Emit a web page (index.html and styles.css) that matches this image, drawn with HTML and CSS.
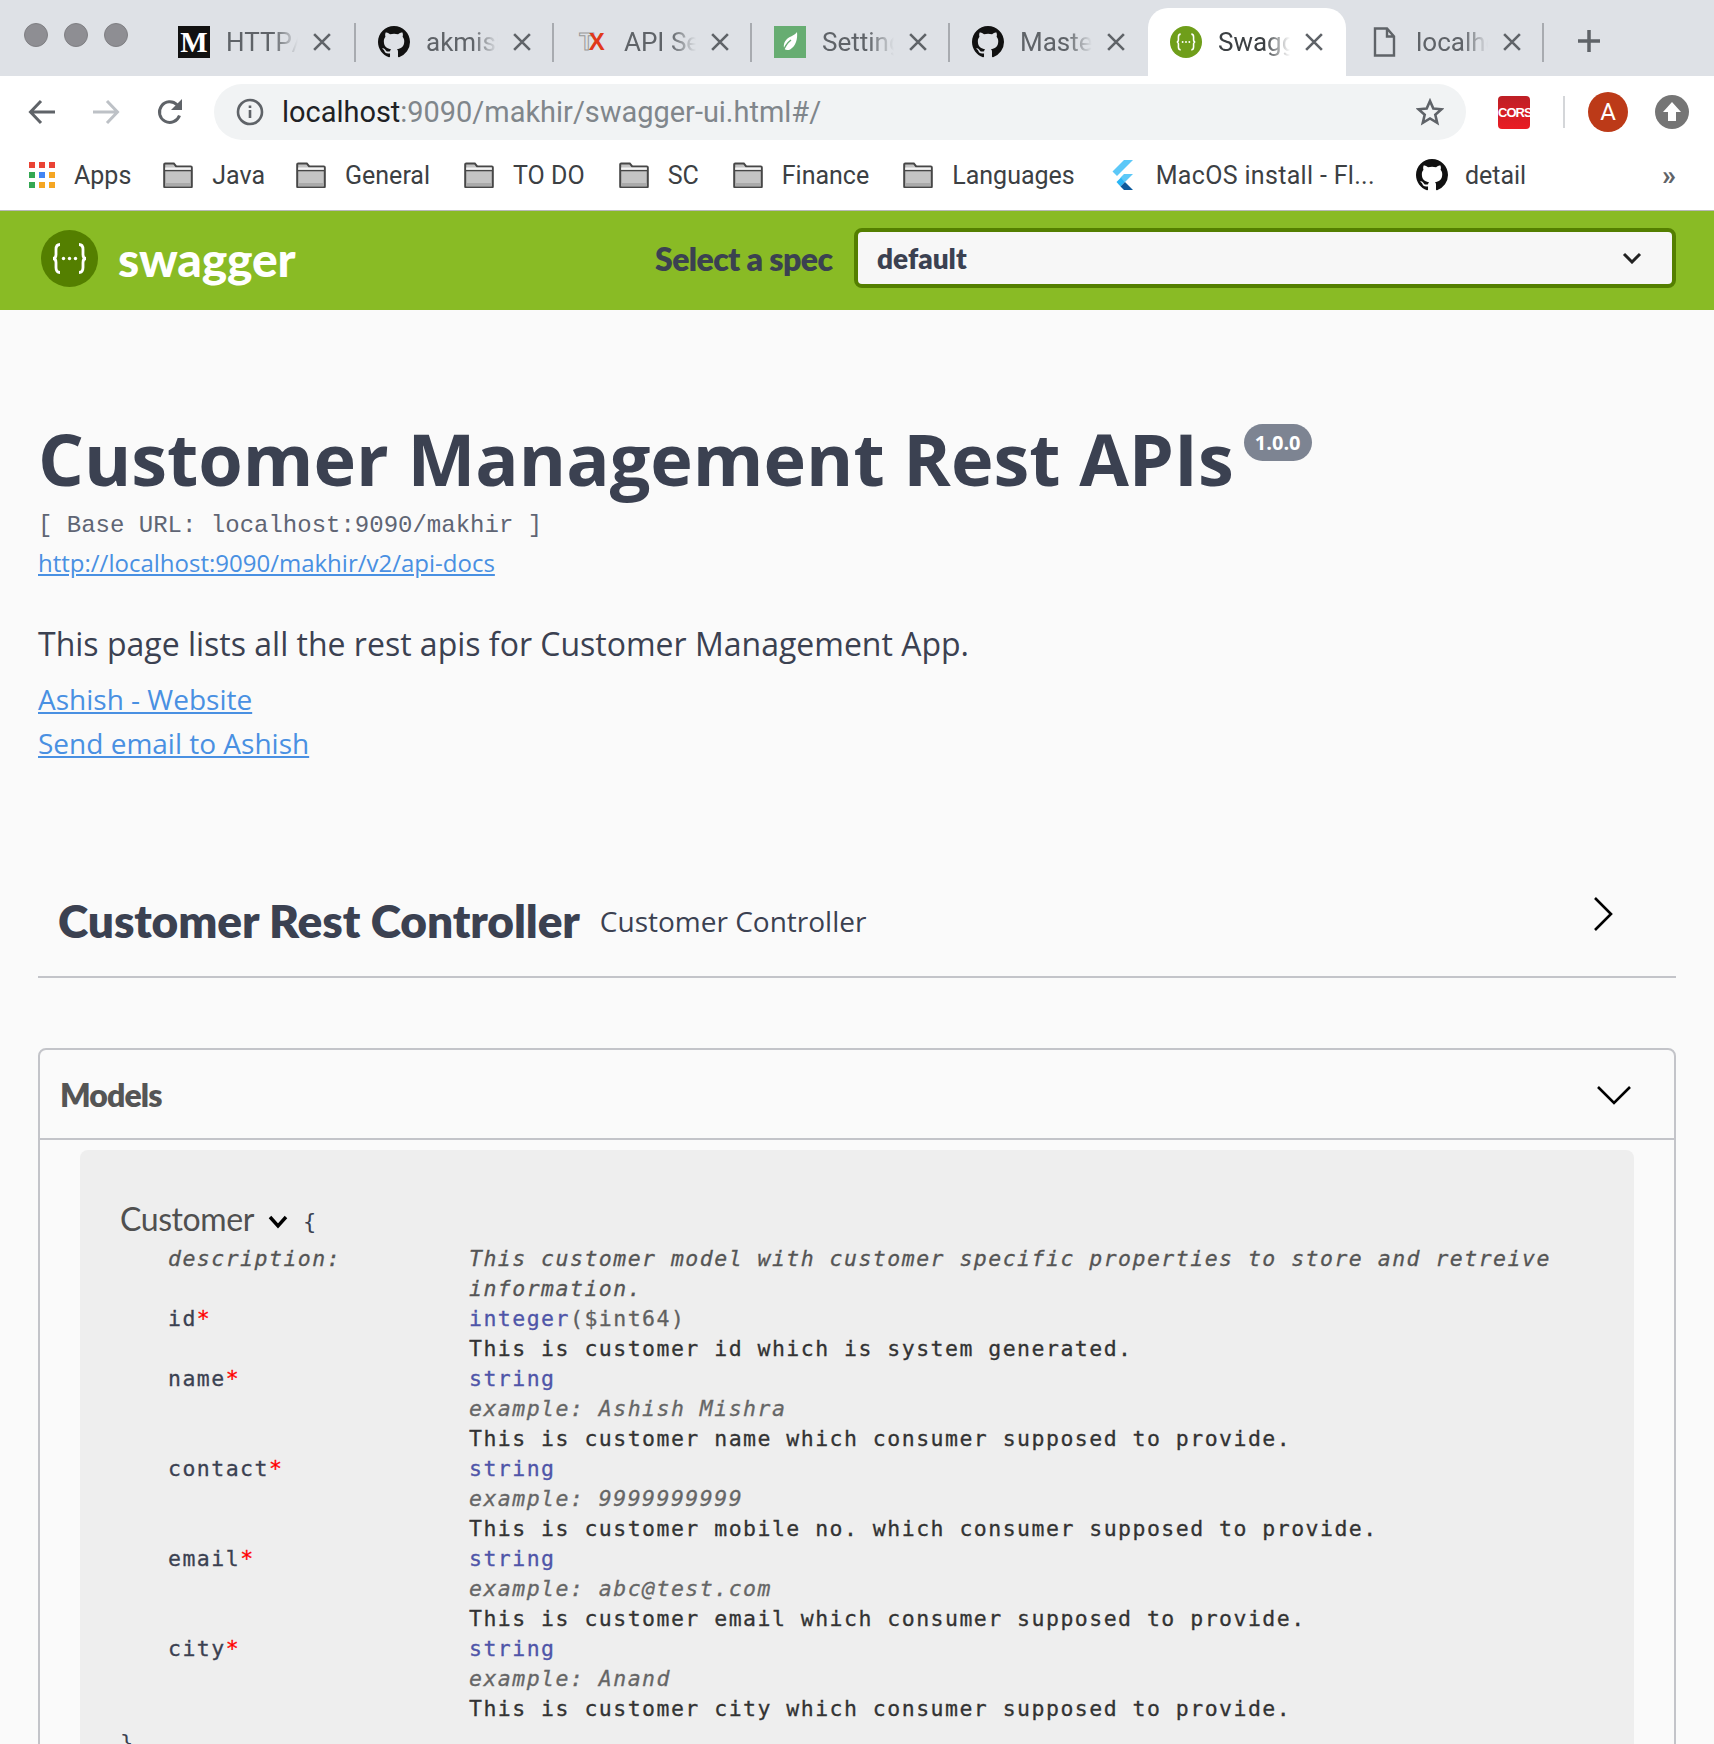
FILE: index.html
```html
<!DOCTYPE html>
<html lang="en">
<head>
  <meta charset="UTF-8" />
  <title>Swagger UI</title>
  <link rel="stylesheet" href="styles.css">
</head>
<body>
  <svg class="defs" width="0" height="0">
    <symbol id="gh" viewBox="0 0 16 16"><path d="M8 0C3.58 0 0 3.58 0 8c0 3.54 2.29 6.53 5.47 7.59.4.07.55-.17.55-.38 0-.19-.01-.82-.01-1.49-2.01.37-2.53-.49-2.69-.94-.09-.23-.48-.94-.82-1.13-.28-.15-.68-.52-.01-.53.63-.01 1.08.58 1.23.82.72 1.21 1.87.87 2.33.66.07-.52.28-.87.51-1.07-1.78-.2-3.64-.89-3.64-3.95 0-.87.31-1.59.82-2.15-.08-.2-.36-1.02.08-2.12 0 0 .67-.21 2.2.82.64-.18 1.32-.27 2-.27s1.36.09 2 .27c1.53-1.04 2.2-.82 2.2-.82.44 1.1.16 1.92.08 2.12.51.56.82 1.27.82 2.15 0 3.07-1.87 3.75-3.65 3.95.29.25.54.73.54 1.48 0 1.07-.01 1.93-.01 2.2 0 .21.15.46.55.38A8.01 8.01 0 0 0 16 8c0-4.42-3.58-8-8-8z"/></symbol>
    <symbol id="x" viewBox="0 0 16 16"><path d="M1 1l14 14M15 1L1 15" fill="none" stroke="currentColor" stroke-width="2.300"/></symbol>
    <symbol id="folder" viewBox="0 0 30 26"><path d="M1.2 24.6V2.4a1 1 0 0 1 1-1h8.6l2.4 3h14.6a1 1 0 0 1 1 1v19.2a.8.8 0 0 1-.8.8H2a.8.8 0 0 1-.8-.8z" fill="#c4c4c4" stroke="#474747" stroke-width="2"/><path d="M2.2 5.5h25.6v3H2.2z" fill="#f4f4f4"/><path d="M2 8.6h26" stroke="#474747" stroke-width="1.4"/><path d="M2.2 21h25.6v3H2.2z" fill="#aaa"/></symbol>
    <symbol id="swag" viewBox="0 0 57 57">
      <circle cx="28.500" cy="28.500" r="28.500" fill="currentColor"/>
      <path d="M19 14.500c-3.500 0-4 2-4 5v5c0 2.200-1 4-3 4 2 0 3 1.800 3 4v5c0 3 .5 5 4 5M38 14.500c3.500 0 4 2 4 5v5c0 2.200 1 4 3 4-2 0-3 1.800-3 4v5c0 3-.5 5-4 5" fill="none" stroke="#fff" stroke-width="2.800"/>
      <circle cx="22.500" cy="28.500" r="1.700" fill="#fff"/><circle cx="28.500" cy="28.500" r="1.700" fill="#fff"/><circle cx="34.500" cy="28.500" r="1.700" fill="#fff"/>
    </symbol>
  </svg>

  <div class="tabstrip">
    <div class="lights"><i></i><i></i><i></i></div>
    <div class="tab">
      <span class="fav fav-medium">M</span>
      <span class="tab-title">HTTP/2 in</span>
      <svg class="tab-x"><use href="#x"/></svg>
    </div>
    <div class="tab">
      <svg class="fav fav-gh"><use href="#gh"/></svg>
      <span class="tab-title">akmishra</span>
      <svg class="tab-x"><use href="#x"/></svg>
    </div>
    <div class="tab">
      <span class="fav fav-tx"><b class="tx-t">T</b><b class="tx-x">X</b></span>
      <span class="tab-title">API Secur</span>
      <svg class="tab-x"><use href="#x"/></svg>
    </div>
    <div class="tab">
      <svg class="fav" viewBox="0 0 32 32"><rect width="32" height="32" fill="#67ad72"/><path d="M23 6c.8 7-1.200 14-6.500 17.200-2.300 1.300-4.700 1-6-.2C9 20 10 15.500 13.500 12.500 16.300 10.300 20.500 9.700 23 6z" fill="#fff"/><path d="M9 26c1.500-5 4-9 8-12" stroke="#67ad72" stroke-width="1.500" fill="none"/></svg>
      <span class="tab-title">Settings</span>
      <svg class="tab-x"><use href="#x"/></svg>
    </div>
    <div class="tab tab-before-active">
      <svg class="fav fav-gh"><use href="#gh"/></svg>
      <span class="tab-title">Master Sp</span>
      <svg class="tab-x"><use href="#x"/></svg>
    </div>
    <div class="tab tab-active">
      <svg class="fav fav-swag"><use href="#swag"/></svg>
      <span class="tab-title">Swagger</span>
      <svg class="tab-x"><use href="#x"/></svg>
    </div>
    <div class="tab">
      <svg class="fav" viewBox="0 0 32 32"><path d="M7 2.500h12l7 8V29.500H7z M19 2.500v8h7" fill="none" stroke="#5f6368" stroke-width="2.400"/></svg>
      <span class="tab-title">localhost</span>
      <svg class="tab-x"><use href="#x"/></svg>
    </div>
    <svg class="newtab" viewBox="0 0 24 24"><path d="M12 1v22M1 12h22" stroke="#5f6368" stroke-width="3.500"/></svg>
  </div>

  <div class="toolbar">
    <svg class="nav-icon" viewBox="0 0 28 28"><path d="M27 14H3M13 3L2.500 14 13 25" fill="none" stroke="#5f6368" stroke-width="3"/></svg>
    <svg class="nav-icon nav-fwd" viewBox="0 0 28 28"><path d="M1 14h24M15 3l10.500 11L15 25" fill="none" stroke="#bdc1c6" stroke-width="3"/></svg>
    <svg class="nav-icon" viewBox="0 0 28 28"><path d="M23.500 17.500A10.300 10.300 0 1 1 21 6.800" fill="none" stroke="#5f6368" stroke-width="3"/><path d="M26 1v11H15z" fill="#5f6368"/></svg>
    <div class="omnibox">
      <svg class="site-info" viewBox="0 0 28 28"><circle cx="14" cy="14" r="12" fill="none" stroke="#5f6368" stroke-width="2.600"/><path d="M14 12v8M14 7.500v2.600" stroke="#5f6368" stroke-width="2.600"/></svg>
      <span class="url"><span class="url-host">localhost</span>:9090/makhir/swagger-ui.html#/</span>
      <svg class="star" viewBox="0 0 28 28"><path d="M14 3l3.300 7.600 8.200.7-6.200 5.400 1.900 8.100L14 20.500l-7.200 4.300 1.900-8.100-6.200-5.400 8.200-.7z" fill="none" stroke="#5f6368" stroke-width="2.600"/></svg>
    </div>
    <span class="cors">CORS</span>
    <span class="tool-sep"></span>
    <span class="avatar">A</span>
    <svg class="update" viewBox="0 0 34 34"><circle cx="17" cy="17" r="17" fill="#757575"/><path d="M17 7l9 10h-5v9h-8v-9H8z" fill="#fff"/></svg>
  </div>

  <div class="bookmarks">
    <span class="bm bm-apps"><span class="apps"><i class="r"></i><i class="r"></i><i class="r"></i><i class="g"></i><i class="b"></i><i class="o"></i><i class="g"></i><i class="o"></i><i class="o"></i></span>Apps</span>
    <span class="bm bm-java"><svg class="bm-icon"><use href="#folder"/></svg>Java</span>
    <span class="bm"><svg class="bm-icon"><use href="#folder"/></svg>General</span>
    <span class="bm"><svg class="bm-icon"><use href="#folder"/></svg>TO DO</span>
    <span class="bm"><svg class="bm-icon"><use href="#folder"/></svg>SC</span>
    <span class="bm"><svg class="bm-icon"><use href="#folder"/></svg>Finance</span>
    <span class="bm"><svg class="bm-icon"><use href="#folder"/></svg>Languages</span>
    <span class="bm bm-macos"><svg class="bm-flutter" viewBox="0 0 24 30"><path d="M15 0h9L8 16l-4.500-4.500z" fill="#5cc8f8"/><path d="M15 14h9l-8 8-4.500-4.500z" fill="#5cc8f8"/><path d="M7.500 22l4.500-4.500 4 4.500-4.500 4.500z" fill="#29b6f6"/><path d="M11.500 26.500l4.500-4.500 8 8h-9z" fill="#0d5a9c"/></svg>MacOS install - Fl...</span>
    <span class="bm"><svg class="bm-gh"><use href="#gh"/></svg>detail</span>
    <span class="bm-more">»</span>
  </div>

  <div class="topbar">
    <div class="logo">
      <svg class="logo-mark"><use href="#swag"/></svg>
      <span class="logo-text">swagger</span>
    </div>
    <label class="spec-label">Select a spec</label>
    <div class="spec-select">
      <span>default</span>
      <svg class="spec-arrow" viewBox="0 0 20 12"><path d="M2 2l8 8 8-8" fill="none" stroke="#222" stroke-width="3"/></svg>
    </div>
  </div>

  <main class="page">
    <section class="info">
      <h1>Customer Management Rest APIs<span class="version">1.0.0</span></h1>
      <div class="base-url">[ Base URL: localhost:9090/makhir ]</div>
      <a class="spec-link" href="#">http://localhost:9090/makhir/v2/api-docs</a>
      <p class="desc">This page lists all the rest apis for Customer Management App.</p>
      <a class="info-link" href="#">Ashish - Website</a>
      <a class="info-link" href="#">Send email to Ashish</a>
    </section>

    <div class="tag-row">
      <h2>Customer Rest Controller</h2>
      <span class="tag-desc">Customer Controller</span>
      <svg class="tag-arrow" viewBox="0 0 20 36"><path d="M2 2l16 16L2 34" fill="none" stroke="#000" stroke-width="2.600"/></svg>
    </div>

    <section class="models">
      <div class="models-head">
        <h3>Models</h3>
        <svg class="models-arrow" viewBox="0 0 36 20"><path d="M2 2l16 16L34 2" fill="none" stroke="#000" stroke-width="2.600"/></svg>
      </div>
      <div class="model-box">
        <div class="model-title">Customer <svg class="model-arrow" viewBox="0 0 20 14"><path d="M2 2l8 9 8-9" fill="none" stroke="#000" stroke-width="3.400"/></svg> <span class="brace">{</span></div>
        <table class="model">
          <tr class="desc-row"><td>description:</td><td>This customer model with customer specific properties to store and retreive information.</td></tr>
          <tr><td>id<em>*</em></td><td><div><span class="type">integer</span><span class="fmt">($int64)</span></div><div>This is customer id which is system generated.</div></td></tr>
          <tr><td>name<em>*</em></td><td><div class="type">string</div><div class="eg">example: Ashish Mishra</div><div>This is customer name which consumer supposed to provide.</div></td></tr>
          <tr><td>contact<em>*</em></td><td><div class="type">string</div><div class="eg">example: 9999999999</div><div>This is customer mobile no. which consumer supposed to provide.</div></td></tr>
          <tr><td>email<em>*</em></td><td><div class="type">string</div><div class="eg">example: abc@test.com</div><div>This is customer email which consumer supposed to provide.</div></td></tr>
          <tr><td>city<em>*</em></td><td><div class="type">string</div><div class="eg">example: Anand</div><div>This is customer city which consumer supposed to provide.</div></td></tr>
        </table>
        <div class="brace close">}</div>
      </div>
    </section>
  </main>
</body>
</html>
```

FILE: styles.css
```css
html, body { margin: 0; height: 1744px; overflow: hidden; }
body { background: #fafafa; font-family: "Open Sans", sans-serif; color: #3b4151; }
.defs { position: absolute; }

.tabstrip { height: 76px; background: #dee1e6; display: flex; align-items: flex-end; font-family: Roboto, sans-serif; }
.lights { width: 158px; height: 76px; box-sizing: border-box; padding: 23px 0 0 24px; display: flex; gap: 16px; }
.lights i { width: 24px; height: 24px; border-radius: 50%; background: #8e8e93; border: 1px solid #7f7f83; box-sizing: border-box; }
.tab { width: 198px; height: 68px; box-sizing: border-box; display: flex; align-items: center; padding: 0 0 1px 22px; position: relative; color: #5f6368; font-size: 26px; }
.tab::after { content: ""; position: absolute; right: 0; top: 15px; height: 39px; width: 2px; background: #a8abb0; }
.tab-before-active::after, .tab-active::after { display: none; }
.tab-active { background: #fff; border-radius: 20px 20px 0 0; color: #3c4043; }
.fav { width: 32px; height: 32px; flex: none; }
.fav-medium { background: #111; color: #fff; font: bold 29px/32px "Liberation Serif", serif; text-align: center; margin-left: -2px; }
.fav-gh { fill: #111; }
.fav-swag { color: #6f9e1a; }
.fav-tx { display: flex; font: bold 24px/32px "Liberation Sans", sans-serif; justify-content: center; }
.tx-t { color: #dfe1e5; -webkit-text-stroke: 1px #999; margin-right: -5px; }
.tx-x { color: #e0391b; }
.tab-title { width: 72px; margin-left: 16px; overflow: hidden; white-space: nowrap; -webkit-mask-image: linear-gradient(to right, #000 65%, transparent); mask-image: linear-gradient(to right, #000 65%, transparent); }
.tab-x { width: 18px; height: 18px; margin-left: 15px; color: #5f6368; }
.newtab { width: 24px; height: 24px; margin: 0 0 23px 33px; }

.toolbar { height: 64px; background: #fff; display: flex; align-items: center; padding: 0 0 0 28px; }
.nav-icon { width: 28px; height: 28px; flex: none; margin: 8px 36px 0 0; }
.omnibox { flex: none; width: 1252px; height: 56px; margin: 8px 0 0 -6px; background: #f1f3f4; border-radius: 28px; display: flex; align-items: center; padding: 0 22px 0 22px; box-sizing: border-box; }
.site-info { width: 28px; height: 28px; flex: none; }
.url { margin-left: 18px; font: 28.950px Roboto, sans-serif; color: #80868b; flex: 1; white-space: nowrap; }
.url-host { color: #202124; }
.star { width: 28px; height: 28px; flex: none; }
.cors { width: 32px; height: 33px; margin: 8px 0 0 32px; background: linear-gradient(#bd1f25, #ea1c24); border-radius: 4px; color: #fff; font: bold 13px/33px "Liberation Sans", sans-serif; text-align: center; letter-spacing: -1px; }
.tool-sep { width: 2px; height: 32px; margin: 8px 0 0 33px; background: #d4d6d9; }
.avatar { width: 40px; height: 40px; margin: 8px 0 0 23px; border-radius: 50%; background: #bc3a18; color: #fff; font: 24px/40px Roboto, sans-serif; text-align: center; }
.update { width: 34px; height: 34px; margin: 8px 0 0 27px; }

.bookmarks { height: 70px; border-bottom: 1px solid #b8b8b8; background: #fff; display: flex; align-items: center; padding: 0 0 0 29px; font: 25px Roboto, sans-serif; color: #3c4043; position: relative; }
.bm { display: flex; align-items: center; margin-right: 34px; white-space: nowrap; }
.bm-apps { margin-right: 32px; }
.bm-java { margin-right: 31px; }
.bm-macos { margin-right: 41px; letter-spacing: .32px; }
.apps { width: 26px; height: 26px; display: grid; grid-template-columns: repeat(3, 6px); gap: 4px; margin-right: 19px; }
.apps i { width: 6px; height: 6px; }
.apps .r { background: #ea4335; }
.apps .g { background: #34a853; }
.apps .b { background: #4285f4; }
.apps .o { background: #f5a623; }
.bm-icon { width: 30px; height: 26px; margin-right: 19px; }
.bm-flutter { width: 24px; height: 30px; margin-right: 23px; }
.bm-gh { width: 32px; height: 32px; margin-right: 17px; fill: #111; }
.bm-more { position: absolute; right: 38px; color: #5f6368; font-size: 28px; font-weight: 700; }

.topbar { height: 99px; background: #89bb25; display: flex; align-items: center; box-sizing: border-box; padding: 0 38px 5px 41px; }
.logo { display: flex; align-items: center; width: 614px; }
.logo-mark { width: 57px; height: 57px; color: #547f00; }
.logo-text { margin-left: 20px; font: 900 48px Lato, sans-serif; color: #fff; letter-spacing: -.2px; }
.spec-label { font: 800 32px Lato, sans-serif; width: 199px; color: #3b4151; letter-spacing: -.6px; }
.spec-select { flex: 1; height: 60px; box-sizing: border-box; border: 4px solid #547f00; border-radius: 8px; background: #f7f7f7; display: flex; align-items: center; justify-content: space-between; padding: 0 30px 0 19px; font: 800 28px Lato, sans-serif; }
.spec-arrow { width: 20px; height: 12px; }

.page { padding: 0 38px; }
.info { padding-top: 105px; }
h1 { margin: 0; font: 700 72px/86px "Open Sans", sans-serif; white-space: nowrap; }
.version { display: inline-block; vertical-align: top; margin: 9px 0 0 10px; width: 68px; height: 37px; border-radius: 19px; background: #7d8492; color: #fff; font: 700 20px/37px "Open Sans", sans-serif; text-align: center; }
.base-url { margin-top: 10px; font: 24px/30px "Liberation Mono", monospace; color: #5f6574; }
.spec-link { display: block; margin-top: 4px; font-size: 24px; line-height: 36px; color: #4990e2; width: max-content; }
.desc { margin: 41px 0 11px; font-size: 32px; line-height: 44px; }
.info-link { display: block; font-size: 28px; line-height: 44px; color: #4990e2; width: max-content; }

.tag-row { height: 113px; margin-top: 100px; box-sizing: border-box; border-bottom: 2px solid #c3c4c9; display: flex; align-items: center; padding: 0 63px 0 20px; }
h2 { margin: 0; font: 800 46px Lato, sans-serif; letter-spacing: -.1px; }
.tag-desc { margin-left: 20px; font-size: 28px; }
.tag-arrow { width: 20px; height: 36px; margin: 0 0 14px auto; }

.models { margin-top: 70px; height: 800px; border: 2px solid #c3c4c9; border-radius: 8px; }
.models-head { height: 88px; border-bottom: 2px solid #c3c4c9; display: flex; align-items: center; justify-content: space-between; padding: 0 42px 0 20px; }
h3 { margin: 0; font: 800 32px Lato, sans-serif; color: #555; letter-spacing: -.9px; }
.models-arrow { width: 36px; height: 20px; margin-top: 2px; }
.model-box { margin: 10px 40px 0; height: 700px; background: #eee; border-radius: 8px; padding: 49px 40px 0; box-sizing: border-box; }
.model-title { font: 32px/40px Lato, sans-serif; color: #505050; letter-spacing: -.4px; display: flex; align-items: center; }
.model-arrow { width: 20px; height: 14px; margin: 6px 0 0 14px; }
.brace { font: 22px/30px "DejaVu Sans Mono", monospace; color: #3b4151; }
.model-title .brace { margin: 6px 0 0 15px; }
.model { margin: 5px 0 0 48px; border-collapse: collapse; font: 21.500px/30px "DejaVu Sans Mono", monospace; letter-spacing: 1.480px; color: #333; -webkit-text-stroke: .3px; }
.model td { padding: 0; vertical-align: top; }
.model td:first-child { width: 301px; color: #3b4151; }
.model em { color: #f00; font-style: normal; }
.desc-row td { font-style: italic; color: #555 !important; }
.type { color: #4f55a8; }
.fmt { color: #606060; }
.eg { font-style: italic; color: #666; }
.close { margin-top: 4px; }
```
